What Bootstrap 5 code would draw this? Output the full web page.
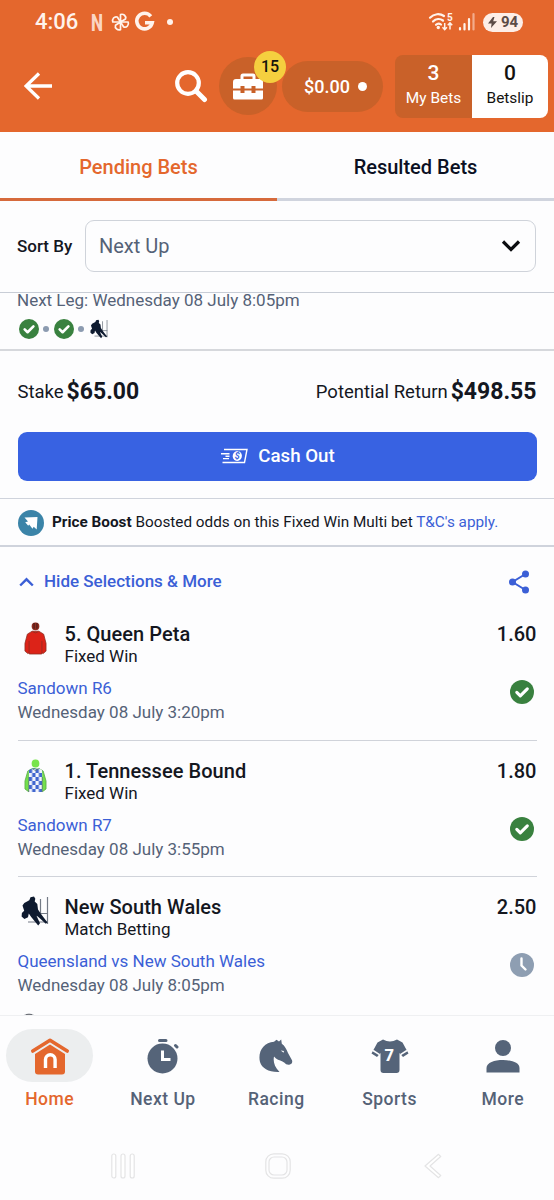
<!DOCTYPE html>
<html lang="en">
<head>
<meta charset="utf-8">
<meta name="viewport" content="width=device-width, initial-scale=1">
<title>Pending Bets</title>
<link href="https://cdn.jsdelivr.net/npm/bootstrap@5.3.0/dist/css/bootstrap.min.css" rel="stylesheet">
<style>
:root{--brand:#e4672d;--brand-dark:#c96129;--ink:#14171f;--slate:#556277;--link:#3b5fd6;--line:#d3d6dc;--ok:#39813f}
body{font-family:Roboto,"Liberation Sans",sans-serif;color:var(--ink);background:#fdfdfe;width:554px;height:1200px;overflow:hidden;letter-spacing:0}
svg{display:block;flex:none}
svg text{font-family:Roboto,"Liberation Sans",sans-serif}
.brandbar{background:var(--brand);height:132px;color:#fff}
.statusline{height:44px;padding:0 31px 0 35px}
.clock{font-size:22px;font-weight:500;line-height:44px;width:44px;white-space:nowrap;color:#fff3ec}
.battery{width:40px;height:19px;border-radius:10px;background:#fdeee7;color:#5b4b46;font-size:15px;font-weight:700;line-height:19px}
.tools{height:84px;padding:0 6px 0 24px}
.toolcase{width:58px;height:58px;margin-left:11px;border-radius:50%;background:var(--brand-dark)}
.count{top:-6px;left:35px;width:32px;height:32px;border-radius:50%;background:#f5cf3f;color:#16140c;font-size:16px;font-weight:500;line-height:32px}
.balance{width:101px;height:51px;margin-left:5px;padding-left:6px;border-radius:26px;background:var(--brand-dark);font-size:18px;font-weight:500}
.balance i{width:9px;height:9px;border-radius:50%;background:#fff}
.counter{height:63px;font-size:15.4px;line-height:20px;padding-top:6px}
.counter b{font-size:21px;font-weight:500;line-height:24px;display:block;margin-bottom:3px}
.mybets{width:77px;margin-left:12px;background:var(--brand-dark);border-radius:8px 0 0 8px}
.slip{width:76px;background:#fff;color:#14120f;border-radius:0 8px 8px 0}
.tabs{height:69px}
.tabs div{width:277px;font-size:20px;font-weight:500;line-height:70px;height:69px;border-bottom:3px solid #d0d4de;color:#0b1023}
.tabs .on{color:var(--brand);border-color:#d66a3c}
.sort{height:91px;padding:0 18px 0 17px}
.sort label{font-size:17px;font-weight:500;width:68px}
.picker{height:52px;margin-top:-1px;border:1.5px solid #cfd3da;border-radius:9px;font-size:20px;color:var(--slate);padding:0 14px 0 13px}
.legs{height:59px;border-top:1px solid #c8cdd6;border-bottom:2px solid #d6d8dc;padding:0 18px 0 17px}
.legs p{font-size:17px;line-height:16px;margin:-1px 0 11px;color:var(--slate);white-space:nowrap}
.dot{width:6px;height:6px;border-radius:50%;background:#8c9bb0}
.money{height:81px;padding:2px 17.5px 0;font-size:18.500px}
.money b{font-size:23px;font-weight:700}
.cash{height:49px;margin:0 17.5px;border-radius:9px;background:#3862e2;border:0;color:#fff;font-size:18.700px;font-weight:500;width:519px;padding:0 0 1px 2px}
.boost{height:49px;margin-top:17px;border-top:1px solid #cfd3dc;border-bottom:2px solid #cfd3dc;padding:1px 18px 0;font-size:15.300px;white-space:nowrap}
.hideline{height:57px;padding:13px 23px 0 19px;color:var(--link);font-size:17px;font-weight:500}
.a{color:var(--link)}
.pick{margin:0 17.5px;height:136.5px;padding-top:18px;border-bottom:1.5px solid #d0d3da}
.pick h2{font-size:20px;font-weight:500;line-height:24px;margin:0;letter-spacing:.05px}
.pick .kind{font-size:17px;line-height:21px;margin-bottom:9px}
.pick .meta{font-size:17px;line-height:24px}
.pick .art{width:47px}
.pick .ev{color:var(--slate)}
.odds{font-size:20px;font-weight:500;line-height:24px}
.result{margin:34px 3px 0 0}
.viewport{height:883px;overflow:hidden}
.dock{height:116px;border-top:1px solid #eff0f2;padding-top:13px}
.dock .dest{width:113.3px;color:var(--slate);font-size:17.500px;font-weight:500;letter-spacing:.5px}
.dock .pill{width:87px;height:53px;border-radius:27px}
.dock .on .pill{background:#eceeef}
.dock .dest.on{color:var(--brand)}
.dock span{line-height:22px;margin-top:6px}
.dockrow{margin:0 -7px}
.sysnav{height:69px;padding:1px 112px 0 111px}
</style>
</head>
<body>
<svg width="0" height="0" class="position-absolute">
  <symbol id="tick" viewBox="0 0 24 24"><circle cx="12" cy="12" r="12" fill="#39813f"/><path d="M6.800 12.400l3.500 3.500 7-7" fill="none" stroke="#fff" stroke-width="3.100" stroke-linecap="round" stroke-linejoin="round"/></symbol>
  <symbol id="rugby" viewBox="0 0 28 30">
    <path d="M19.500 3v17M26.500 1v27M19 17.500h8M7 26h20" fill="none" stroke="#747b86" stroke-width="1.200"/>
    <path d="M9.500 1.200L13 .5l1.300 2.200-.6 2.800 2.600 2.500.7 5.500 3 4.500 6.500 8.500-1.700 1.200-8-7.200-1.300-.8 3.500 7.500-1.800 2.200-7-8.300-2.400-3.700-.8 3.800-3.600 1.900L.6 20.500.900 17l2.300-2.200L1.500 9.500l1.800-2.600 5-2.700z" fill="#0e1a2f"/>
  </symbol>
</svg>

<header class="brandbar">
  <div class="statusline d-flex align-items-center">
    <span class="clock">4:06</span>
    <svg class="ms-2" width="90" height="32" viewBox="0 -4 90 32">
      <text x="4" y="20.500" font-size="24" font-weight="800" fill="#fbd5c4" textLength="12" lengthAdjust="spacingAndGlyphs">N</text>
      <g fill="none" stroke="#fff3ec" stroke-width="1.700" stroke-linejoin="round"><path d="M33.500 12V4.500c3-1 6 1.500 5 4.500l-5 3"/><path d="M33.500 12h7.700c1 3-1.500 6-4.500 5l-3.200-5"/><path d="M33.500 12v7.700c-3 1-6-1.500-5-4.500l5-3.200"/><path d="M33.500 12h-7.700c-1-3 1.500-6 4.500-5l3.200 5"/></g>
      <path d="M63.800 6.300A7.800 7.800 0 1 0 65.200 12.800H58" fill="none" stroke="#fff3ec" stroke-width="3.600"/>
      <circle cx="83" cy="12" r="3" fill="#fff3ec"/>
    </svg>
    <svg class="ms-auto" width="49" height="22" viewBox="0 0 49 22">
      <g fill="none" stroke="#fff3ec" stroke-width="2.200" stroke-linecap="round"><path d="M4 6.700C8 2.500 14 2.300 18 5"/><path d="M7 10.500c3-3 7-3.200 10-1"/><path d="M10 13.800c1.500-1.500 3.500-1.500 5-.3"/></g>
      <circle cx="12.300" cy="16.500" r="1.700" fill="#fff3ec"/>
      <path d="M18.700 12v6.500M16.500 16.300l2.200 2.400 2.200-2.400M24 18.500V12M21.800 14.200l2.200-2.400 2.200 2.400" fill="none" stroke="#fff3ec" stroke-width="1.500"/>
      <text x="21" y="9.500" font-size="10" font-weight="700" fill="#fff3ec">5</text>
      <g stroke-width="2.200" stroke-linecap="round" stroke="#fff3ec"><path d="M34 17v1.500M38.500 13v5.500M43 8v10.500"/><path d="M47.500 3v15.500" stroke="#f3ac8b"/></g>
    </svg>
    <div class="battery d-flex align-items-center justify-content-center ms-2">
      <svg width="9" height="11" viewBox="0 0 9 11"><path d="M5 0L0 6.500h3.600L3 11l6-6.700H5.200L6.500 0z" fill="#5b4b46"/></svg><span class="ms-1">94</span>
    </div>
  </div>
  <div class="tools d-flex align-items-center">
    <svg width="30" height="30" viewBox="0 0 30 30"><path d="M28 15H3M15 2.500L2 15l13 12.500" fill="none" stroke="#fff" stroke-width="3.300"/></svg>
    <svg class="ms-auto" width="34" height="34" viewBox="0 0 34 34"><circle cx="14" cy="14" r="10.800" fill="none" stroke="#fff" stroke-width="4.200"/><path d="M22 22l8.500 8.500" stroke="#fff" stroke-width="5" stroke-linecap="round"/></svg>
    <div class="toolcase position-relative d-flex align-items-center justify-content-center">
      <svg width="30" height="27" viewBox="0 0 30 27"><path d="M7.500 7V3A2.500 2.500 0 0 1 10 .5h10A2.500 2.500 0 0 1 22.500 3v4h-3V3.500h-9V7z" fill="#fff"/><path d="M3 6h24a3 3 0 0 1 3 3v6.500h-7.500V13h-4v2.500h-7V13h-4v2.500H0V9a3 3 0 0 1 3-3zM0 17.500h7.500V20h4v-2.500h7V20h4v-2.500H30V25a1.500 1.500 0 0 1-1.500 1.500h-27A1.500 1.500 0 0 1 0 25z" fill="#fff"/></svg>
      <div class="count position-absolute text-center">15</div>
    </div>
    <div class="balance d-flex align-items-center justify-content-center"><span>$0.00</span><i class="ms-2"></i></div>
    <div class="counter mybets text-center"><b>3</b>My Bets</div>
    <div class="counter slip text-center"><b>0</b>Betslip</div>
  </div>
</header>

<main class="viewport">
  <nav class="tabs d-flex text-center"><div class="on">Pending Bets</div><div>Resulted Bets</div></nav>
  <div class="sort d-flex align-items-center">
    <label>Sort By</label>
    <div class="picker flex-grow-1 d-flex align-items-center justify-content-between"><span>Next Up</span>
      <svg width="20" height="14" viewBox="0 0 20 14"><path d="M2 2.500l8 8 8-8" fill="none" stroke="#0c0d10" stroke-width="3.200"/></svg></div>
  </div>
  <section class="legs">
    <p>Next Leg: Wednesday 08 July 8:05pm</p>
    <div class="d-flex align-items-center">
      <svg style="margin-left:2px" width="20" height="20"><use href="#tick"/></svg><i class="dot" style="margin:0 5px 0 4px"></i>
      <svg width="20" height="20"><use href="#tick"/></svg><i class="dot" style="margin:0 6px 0 4px"></i>
      <svg width="18" height="20"><use href="#rugby"/></svg>
    </div>
  </section>
  <section class="money d-flex align-items-center justify-content-between">
    <div class="d-flex align-items-center"><span style="margin-right:3px">Stake</span><b>$65.00</b></div>
    <div class="d-flex align-items-center"><span style="margin-right:3px">Potential Return</span><b>$498.55</b></div>
  </section>
  <button class="cash btn d-flex align-items-center justify-content-center">
    <svg width="27" height="16" viewBox="0 0 27 16"><g fill="none" stroke="#fff" stroke-width="1.400"><path d="M3 1.500h23L23.500 14.500H1.500M0 5.800h8.500M4.500 8.200h4M2 10.600h6"/></g><ellipse cx="16.300" cy="8" rx="4.600" ry="5" fill="#fff" transform="rotate(15 16.300 8)"/><text x="13.800" y="11.200" font-size="9" font-weight="700" font-style="italic" fill="#3862e2">$</text></svg>
    <span style="margin-left:10px">Cash Out</span>
  </button>
  <section class="boost d-flex align-items-center">
    <svg width="26" height="26" viewBox="0 0 26 26"><circle cx="13" cy="13" r="13" fill="#3b84a8"/><path d="M6.500 7.500L19.500 7l-.8 12.500-3-2.800-1.200 2-3.300-4.200-1 1.300-3-3.500 2.800-.8z" fill="#fff"/></svg>
    <span class="ms-2"><b>Price Boost</b> Boosted odds on this Fixed Win Multi bet <span class="a">T&amp;C's apply.</span></span>
  </section>
  <div class="hideline d-flex align-items-center">
    <svg width="15" height="10" viewBox="0 0 15 10"><path d="M1.200 8.500l6.300-6.200 6.300 6.200" fill="none" stroke="#3b5fd6" stroke-width="2.400"/></svg>
    <span style="margin-left:10px">Hide Selections &amp; More</span>
    <svg class="ms-auto" width="23" height="24" viewBox="0 0 23 24"><path d="M17.500 4L4.500 12l13 8" fill="none" stroke="#3b5fd6" stroke-width="2"/><g fill="#3b5fd6"><circle cx="17.500" cy="4" r="3.500"/><circle cx="4.500" cy="12" r="3.500"/><circle cx="17.500" cy="20" r="3.500"/></g></svg>
  </div>

  <article class="pick d-flex">
    <div class="flex-grow-1">
      <div class="d-flex">
        <div class="art"><svg style="margin-left:6px" width="23" height="33" viewBox="0 0 24 34" preserveAspectRatio="none"><rect x="8" y=".5" width="8" height="8" rx="3.800" fill="#8f2c20"/><path d="M10.500 1v6M13.500 1v6" stroke="#4c1c18" stroke-width="1.200"/><path d="M8.500 9.500h7l5 3 2.500 9.500v8l-3 2.500-1-.5-.5 1h-13L5 32l-1 .5L1 30v-8l2.500-9.500z" fill="#dc2318" stroke="#8c2c20" stroke-width=".8"/><path d="M5.300 19.500V32M18.700 19.500V32M9 10q3 2.500 6 0" fill="none" stroke="#8c2c20" stroke-width=".8"/></svg></div>
        <div><h2>5. Queen Peta</h2><div class="kind">Fixed Win</div></div>
      </div>
      <div class="meta"><div class="a">Sandown R6</div><div class="ev">Wednesday 08 July 3:20pm</div></div>
    </div>
    <div class="d-flex flex-column align-items-end"><span class="odds">1.60</span><svg class="result" width="24" height="24"><use href="#tick"/></svg></div>
  </article>

  <article class="pick d-flex">
    <div class="flex-grow-1">
      <div class="d-flex">
        <div class="art"><svg style="margin-left:6px" width="23" height="34" viewBox="0 0 24 34" preserveAspectRatio="none"><defs><pattern id="chk" x="5" y="10" width="7" height="8" patternUnits="userSpaceOnUse"><path fill="#f2f4fb" d="M0 0h7v8H0z"/><path fill="#4267cf" d="M0 0h3.500v4H0zM3.500 4H7v4H3.500z"/></pattern></defs><rect x="8" y=".5" width="8" height="8" rx="3.800" fill="#78e44c"/><path d="M4 12l4.500-2.500h7L20 12l3 10v8l-3.500 2.500h-15L1 30v-8z" fill="#74df4b" stroke="#58a946" stroke-width=".8"/><path d="M8 9.500h8l3 2V33H5V11.500z" fill="url(#chk)"/><path d="M5 18v15M19 18v15M9 10q3 3 6 0" fill="none" stroke="#58796a" stroke-width=".8"/></svg></div>
        <div><h2>1. Tennessee Bound</h2><div class="kind">Fixed Win</div></div>
      </div>
      <div class="meta"><div class="a">Sandown R7</div><div class="ev">Wednesday 08 July 3:55pm</div></div>
    </div>
    <div class="d-flex flex-column align-items-end"><span class="odds">1.80</span><svg class="result" width="24" height="24"><use href="#tick"/></svg></div>
  </article>

  <article class="pick d-flex border-0">
    <div class="flex-grow-1">
      <div class="d-flex">
        <div class="art"><svg style="margin:1px 0 0 3px" width="28" height="30"><use href="#rugby"/></svg></div>
        <div><h2>New South Wales</h2><div class="kind">Match Betting</div></div>
      </div>
      <div class="meta"><div class="a">Queensland vs New South Wales</div><div class="ev">Wednesday 08 July 8:05pm</div></div>
    </div>
    <div class="d-flex flex-column align-items-end"><span class="odds">2.50</span><svg class="result" width="24" height="24" viewBox="0 0 24 24"><circle cx="12" cy="12" r="12" fill="#8e9eb2"/><path d="M11.500 5.500v7l4 4" fill="none" stroke="#fff" stroke-width="2.400" stroke-linecap="round"/></svg></div>
  </article>
  <svg style="margin:-1px 0 0 20px" width="18" height="18" viewBox="0 0 18 18"><circle cx="9" cy="9" r="8" fill="#e7e8ea" stroke="#999da4" stroke-width="1.200"/><path d="M6 1.500h6l-1 3H7z" fill="#33373e"/></svg>
</main>

<nav class="dock overflow-hidden">
 <div class="dockrow d-flex text-center">
  <div class="dest on d-flex flex-column align-items-center"><div class="pill d-flex align-items-center justify-content-center">
    <svg width="40" height="38" viewBox="0 0 40 38"><path d="M2.800 14L20 3.200 37.200 14" fill="none" stroke="#e4672d" stroke-width="3.600" stroke-linecap="round" stroke-linejoin="round"/><path d="M20 7.500L35 17v17.500a3 3 0 0 1-3 3H8a3 3 0 0 1-3-3V17z" fill="#e4672d"/><path d="M15.500 31V22.500a4.800 4.800 0 0 1 9.600 0V31" fill="none" stroke="#fff" stroke-width="3.400"/></svg></div><span>Home</span></div>
  <div class="dest d-flex flex-column align-items-center"><div class="pill d-flex align-items-center justify-content-center">
    <svg width="32" height="36" viewBox="0 0 32 36"><circle cx="15.500" cy="20.500" r="15" fill="#556479"/><path d="M12.500 2.500h6.500M28.500 7.500l1.500 1.500" stroke="#556479" stroke-width="3" stroke-linecap="round"/><path d="M15.500 12.500v9h8" fill="none" stroke="#fff" stroke-width="3"/></svg></div><span>Next Up</span></div>
  <div class="dest d-flex flex-column align-items-center"><div class="pill d-flex align-items-center justify-content-center">
    <svg width="34" height="34" viewBox="0 0 34 34"><path d="M15 2.800L17.500.8l2.500 1.700L22.200.5l.6 4.200c3 2 5 6 6.200 9.300l4 7.200c.8 2.500-.5 4.300-2.800 4.500-2.200.2-3.700-.8-4.700-2-2.500-2-6-2.300-8.500-4.200L15 17.500c-1 5 .3 10.500 5.500 15.500C10 33.500 3 29.500 1 23-1.500 13 4.500 3.500 15 2.800z" fill="#556479"/><path d="M21.800 11.500l3.200.5-.5 1.800z" fill="#fdfdfe"/></svg></div><span>Racing</span></div>
  <div class="dest d-flex flex-column align-items-center"><div class="pill d-flex align-items-center justify-content-center">
    <svg width="38" height="34" viewBox="0 0 38 34"><path d="M12 .5q7 4 14 0l5.500 3 6 11-5.500 3.500-3.500-4V31a3 3 0 0 1-3 3h-13a3 3 0 0 1-3-3V14L6 18 .5 14.500l6-11z" fill="#556479"/><path d="M2 11.500l6.500 4.200M36 11.500l-6.500 4.200" stroke="#fdfdfe" stroke-width="1.600"/><text x="13.500" y="22.300" font-size="17" font-weight="800" fill="#fff" textLength="10" lengthAdjust="spacingAndGlyphs">7</text></svg></div><span>Sports</span></div>
  <div class="dest d-flex flex-column align-items-center"><div class="pill d-flex align-items-center justify-content-center">
    <svg width="34" height="34" viewBox="0 0 34 34"><circle cx="17" cy="9" r="8" fill="#556479"/><path d="M.5 33.500V29c0-5.500 8-8 16.500-8s16.500 2.500 16.500 8v4.500z" fill="#556479"/></svg></div><span>More</span></div>
 </div>
</nav>
<footer class="sysnav d-flex align-items-center justify-content-between">
  <svg width="24" height="26" viewBox="0 0 24 26" fill="#fff" stroke="#e4e4e5" stroke-width="1.200"><rect x=".8" y="1" width="4" height="24" rx="2"/><rect x="10" y="1" width="4" height="24" rx="2"/><rect x="19.200" y="1" width="4" height="24" rx="2"/></svg>
  <svg class="me-1" width="26" height="26" viewBox="0 0 26 26" fill="none" stroke="#e4e4e5" stroke-width="1.200"><rect x=".8" y=".8" width="24.400" height="24.400" rx="8"/><rect x="4" y="4" width="18" height="18" rx="5"/></svg>
  <svg width="18" height="26" viewBox="0 0 18 26" fill="#fff" stroke="#e4e4e5" stroke-width="1.200"><path d="M14.500 1.300l2.200 2.200L6 13l10.700 9.500-2.200 2.200L1 13z" stroke-linejoin="round"/></svg>
</footer>
<script src="https://cdn.jsdelivr.net/npm/bootstrap@5.3.0/dist/js/bootstrap.bundle.min.js"></script>
</body>
</html>
